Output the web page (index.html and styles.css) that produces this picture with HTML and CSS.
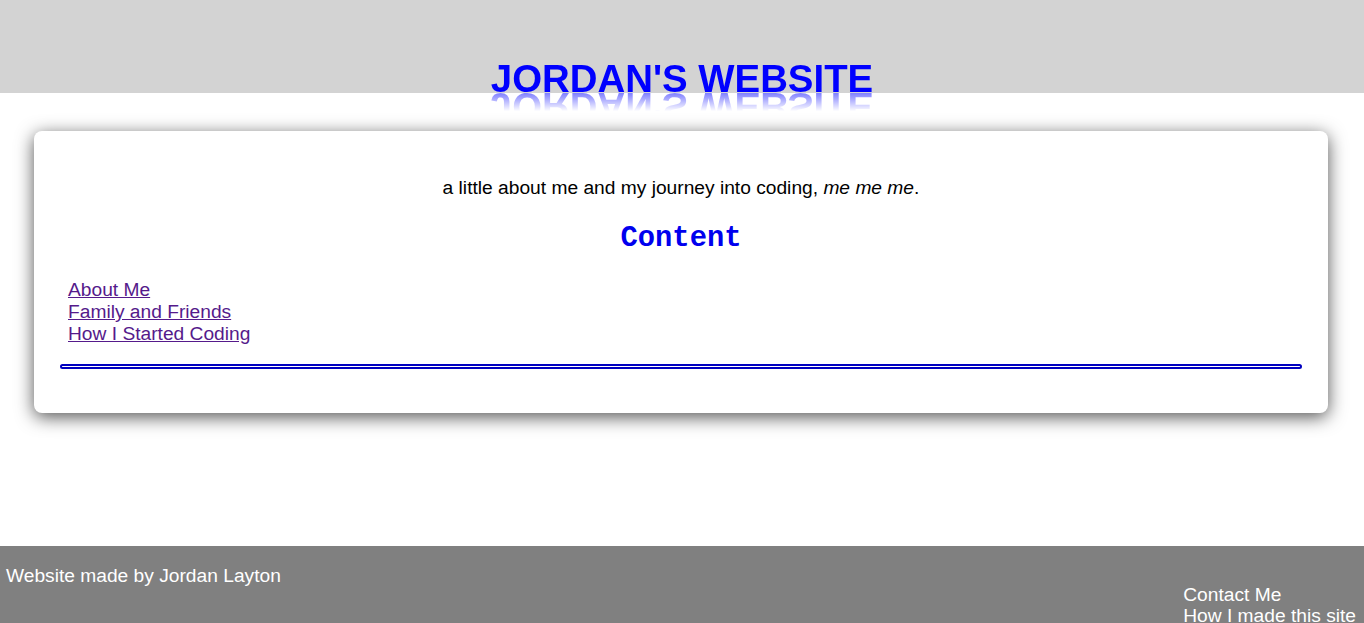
FILE: index.html
```html
<!DOCTYPE html>
<html lang="en">
<head>
<meta charset="utf-8">
<title>Jordan's Website</title>
<link rel="stylesheet" href="styles.css">
</head>
<body>
<header class="site-header">
  <h1 class="site-title"><span class="site-title-text">JORDAN'S WEBSITE</span></h1>
</header>
<main class="main">
  <section class="card">
    <p class="intro">a little about me and my journey into coding, <em>me me me</em>.</p>
    <h2 class="section-title">Content</h2>
    <nav class="content-links">
      <a href="#about">About Me</a>
      <a href="#family">Family and Friends</a>
      <a href="#coding">How I Started Coding</a>
    </nav>
    <hr class="divider">
  </section>
</main>
<footer class="site-footer">
  <p class="footer-credit">Website made by Jordan Layton</p>
  <div class="footer-links">
    <a href="#contact">Contact Me</a>
    <a href="#how">How I made this site</a>
  </div>
</footer>
</body>
</html>
```

FILE: styles.css
```css
html, body {
  margin: 0;
  padding: 0;
}

body {
  font-family: "Liberation Sans", Arial, sans-serif;
  font-size: 19.2px;
  color: #000;
  background: #fff;
}

.site-header {
  background: #d3d3d3;
  height: 93px;
}

.site-title {
  margin: 0;
  padding-top: 57px;
  text-align: center;
  font-size: 38.4px;
  line-height: 44px;
  font-weight: bold;
  color: #0000ff;
}

.site-title-text {
  display: inline-block;
  -webkit-box-reflect: below -17px linear-gradient(transparent 38%, rgba(255, 255, 255, 0.75));
}

.main {
  padding-top: 38px;
  padding-bottom: 133px;
}

.card {
  margin: 0 36px 0 34px;
  padding: 26px 26px 27px;
  background: #fff;
  border-radius: 8px;
  box-shadow: 0 4px 18px rgba(0, 0, 0, 0.68);
}

.intro {
  margin: 20px 0 0;
  text-align: center;
  line-height: 22px;
}

.section-title {
  margin: 23px 0 24px;
  text-align: center;
  font-family: "Liberation Mono", "Courier New", monospace;
  font-size: 28.8px;
  font-weight: bold;
  color: #0000ee;
}

.content-links {
  display: flex;
  flex-direction: column;
  align-items: flex-start;
  padding-left: 8px;
  line-height: 22px;
}

.content-links a {
  color: #551a8b;
  text-decoration: underline;
}

.divider {
  margin: 19px 0 17px;
  height: 1px;
  border: 2px solid #0000c0;
  border-radius: 3px;
  background: #fff;
}

.site-footer {
  background: #808080;
  color: #fff;
  display: flex;
  justify-content: space-between;
  align-items: flex-start;
  padding: 0 8px 30px 6px;
}

.footer-credit {
  margin: 19px 0 0;
  line-height: 22px;
}

.footer-links {
  display: flex;
  flex-direction: column;
  padding-top: 38px;
  line-height: 21px;
}

.footer-links a {
  color: #fff;
  text-decoration: none;
}
```
